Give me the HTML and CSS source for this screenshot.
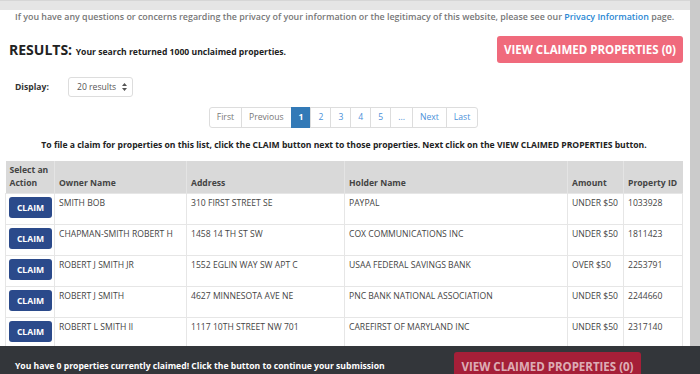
FILE: index.html
```html
<!DOCTYPE html>
<html lang="en">
<head>
  <meta charset="UTF-8">
  <meta name="viewport" content="width=device-width, initial-scale=1.0">
  <title>Unclaimed Property Search Results</title>
  <link rel="stylesheet" href="styles.css">
</head>
<body>

  <div class="page">
    <main class="main">
      <div class="top-band"></div>

      <p class="privacy">
        If you have any questions or concerns regarding the privacy of your information or the legitimacy of this website, please see our <a href="#">Privacy Information</a> page.
      </p>

      <div class="results-row">
        <h2 class="results-title">RESULTS: <span>Your search returned 1000 unclaimed properties.</span></h2>
        <button class="btn-view">VIEW CLAIMED PROPERTIES (0)</button>
      </div>

      <div class="display-row">
        <label class="display-label">Display:</label>
        <div class="fake-select">
          20 results
          <svg width="5" height="8" viewBox="0 0 5 8"><path d="M0 3 L2.5 0 L5 3 Z M0 5 L2.5 8 L5 5 Z" fill="#555"/></svg>
        </div>
      </div>

      <ul class="pager">
        <li class="off">First</li>
        <li class="off">Previous</li>
        <li class="active">1</li>
        <li>2</li>
        <li>3</li>
        <li>4</li>
        <li>5</li>
        <li>...</li>
        <li>Next</li>
        <li>Last</li>
      </ul>

      <p class="instructions">To file a claim for properties on this list, click the CLAIM button next to those properties. Next click on the VIEW CLAIMED PROPERTIES button.</p>

      <table class="results">
        <thead>
          <tr>
            <th class="c-action">Select an Action</th>
            <th class="c-owner">Owner Name</th>
            <th class="c-address">Address</th>
            <th class="c-holder">Holder Name</th>
            <th class="c-amount">Amount</th>
            <th class="c-id">Property ID</th>
          </tr>
        </thead>
        <tbody id="rows"></tbody>
      </table>
    </main>
    <div class="scroll-strip"></div>
  </div>

  <footer class="claim-bar">
    <span>You have 0 properties currently claimed! Click the button to continue your submission</span>
    <button class="btn-continue">VIEW CLAIMED PROPERTIES (0)</button>
  </footer>

  <script>
    // search results shown on this page
    const properties = [
      { owner: 'SMITH BOB', address: '310 FIRST STREET SE', holder: 'PAYPAL', amount: 'UNDER $50', id: '1033928' },
      { owner: 'CHAPMAN-SMITH ROBERT H', address: '1458 14 TH ST SW', holder: 'COX COMMUNICATIONS INC', amount: 'UNDER $50', id: '1811423' },
      { owner: 'ROBERT J SMITH JR', address: '1552 EGLIN WAY SW APT C', holder: 'USAA FEDERAL SAVINGS BANK', amount: 'OVER $50', id: '2253791' },
      { owner: 'ROBERT J SMITH', address: '4627 MINNESOTA AVE NE', holder: 'PNC BANK NATIONAL ASSOCIATION', amount: 'UNDER $50', id: '2244660' },
      { owner: 'ROBERT L SMITH II', address: '1117 10TH STREET NW 701', holder: 'CAREFIRST OF MARYLAND INC', amount: 'UNDER $50', id: '2317140' },
      { owner: 'SMITH ROBERT', address: '2201 PENNSYLVANIA AVE SE', holder: 'VERIZON WIRELESS', amount: 'UNDER $50', id: '2318802' }
    ];

    const tbody = document.getElementById('rows');
    properties.forEach(p => {
      const tr = document.createElement('tr');
      tr.innerHTML = `<td><button class="btn-claim">CLAIM</button></td>
        <td>${p.owner}</td><td>${p.address}</td><td>${p.holder}</td>
        <td>${p.amount}</td><td>${p.id}</td>`;
      tbody.appendChild(tr);
    });
  </script>

</body>
</html>
```

FILE: styles.css
```css
body {
  margin: 0;
  padding: 0;
  font-family: "Open Sans", "Liberation Sans", sans-serif;
  font-size: 8.6px;
  color: #444;
  background-color: #fff;
  overflow: hidden;
}

.page {
  display: flex;
  height: 374px;
  overflow: hidden;
}

.main {
  width: 678px;
  padding: 0 7px 0 5px;
}

.scroll-strip {
  width: 10px;
  background-color: #cbcbcb;
}

.top-band {
  height: 9px;
  margin: 0 -7px 0 -5px;
  background-color: #e5e5e5;
  border-top: 1px solid #d6d6d6;
}

.privacy {
  margin: 1px 0 0 10px;
  line-height: 12px;
  font-size: 8.9px;
  font-weight: 600;
  color: #777;
  white-space: nowrap;
}

.privacy a {
  color: #2a87d3;
  text-decoration: none;
}

.results-row {
  display: flex;
  justify-content: space-between;
  align-items: center;
  margin-top: 13px;
  padding-left: 4px;
}

.results-title {
  margin: 0;
  font-size: 14px;
  font-weight: 700;
  color: #222;
}

.results-title span {
  font-size: 8.6px;
  color: #222;
}

.btn-view {
  width: 186px;
  height: 27px;
  border: none;
  border-radius: 3px;
  background-color: #f06a7c;
  color: #fff;
  font-family: inherit;
  font-size: 11.5px;
  font-weight: 700;
}

.display-row {
  display: flex;
  align-items: center;
  margin-top: 14px;
  padding-left: 10px;
}

.display-label {
  width: 53px;
  font-weight: 700;
  color: #333;
}

.fake-select {
  display: flex;
  align-items: center;
  gap: 6px;
  box-sizing: border-box;
  width: 65px;
  height: 20px;
  padding-left: 8px;
  border: 1px solid #ddd;
  border-radius: 3px;
  color: #555;
}

.pager {
  display: flex;
  justify-content: center;
  margin: 10px 0 0;
  padding: 0;
  list-style: none;
}

.pager li {
  box-sizing: border-box;
  height: 21px;
  line-height: 19px;
  padding: 0 7px;
  min-width: 20px;
  text-align: center;
  border: 1px solid #ddd;
  margin-left: -1px;
  color: #4a90d9;
}

.pager li:first-child {
  border-radius: 3px 0 0 3px;
}

.pager li:last-child {
  border-radius: 0 3px 3px 0;
}

.pager li.off {
  color: #777;
}

.pager li.active {
  background-color: #337ab7;
  border-color: #337ab7;
  color: #fff;
  font-weight: 700;
}

.instructions {
  margin: 11px 0 0;
  line-height: 12px;
  text-align: center;
  font-weight: 700;
  color: #222;
}

.results {
  width: 100%;
  margin-top: 10px;
  border-collapse: collapse;
  table-layout: fixed;
}

.results th {
  box-sizing: border-box;
  background-color: #d9d9d9;
  border-left: 1px solid #e4e4e4;
  padding: 3px 4px 4px;
  height: 32px;
  text-align: left;
  vertical-align: bottom;
  font-weight: 700;
  line-height: 12.5px;
  color: #444;
}

.results th:first-child {
  border-left: none;
}

.c-action { width: 49px; }
.c-owner { width: 132px; }
.c-address { width: 158px; }
.c-holder { width: 223px; }
.c-amount { width: 56px; }

.results td {
  height: 24px;
  padding: 3px 4px;
  border: 1px solid #e6e6e6;
  vertical-align: top;
  line-height: 13px;
  white-space: nowrap;
  overflow: hidden;
}

.results td:first-child {
  padding: 3px;
}

.btn-claim {
  display: block;
  width: 43px;
  height: 21px;
  padding: 0;
  border: none;
  border-radius: 3px;
  background-color: #2b4a8b;
  color: #fff;
  font-family: inherit;
  font-size: 8.6px;
  font-weight: 700;
}

.claim-bar {
  position: fixed;
  left: 0;
  right: 0;
  bottom: -12px;
  height: 40px;
  box-sizing: border-box;
  display: grid;
  grid-template-columns: 439px auto;
  align-items: center;
  padding: 6px 0 6px 15px;
  background-color: #33363a;
  color: #fff;
  font-weight: 700;
}

.btn-continue {
  width: 187px;
  height: 28px;
  border: none;
  border-radius: 3px;
  background-color: #a51f38;
  color: rgba(255, 255, 255, 0.65);
  font-family: inherit;
  font-size: 11.5px;
  font-weight: 700;
}
```
